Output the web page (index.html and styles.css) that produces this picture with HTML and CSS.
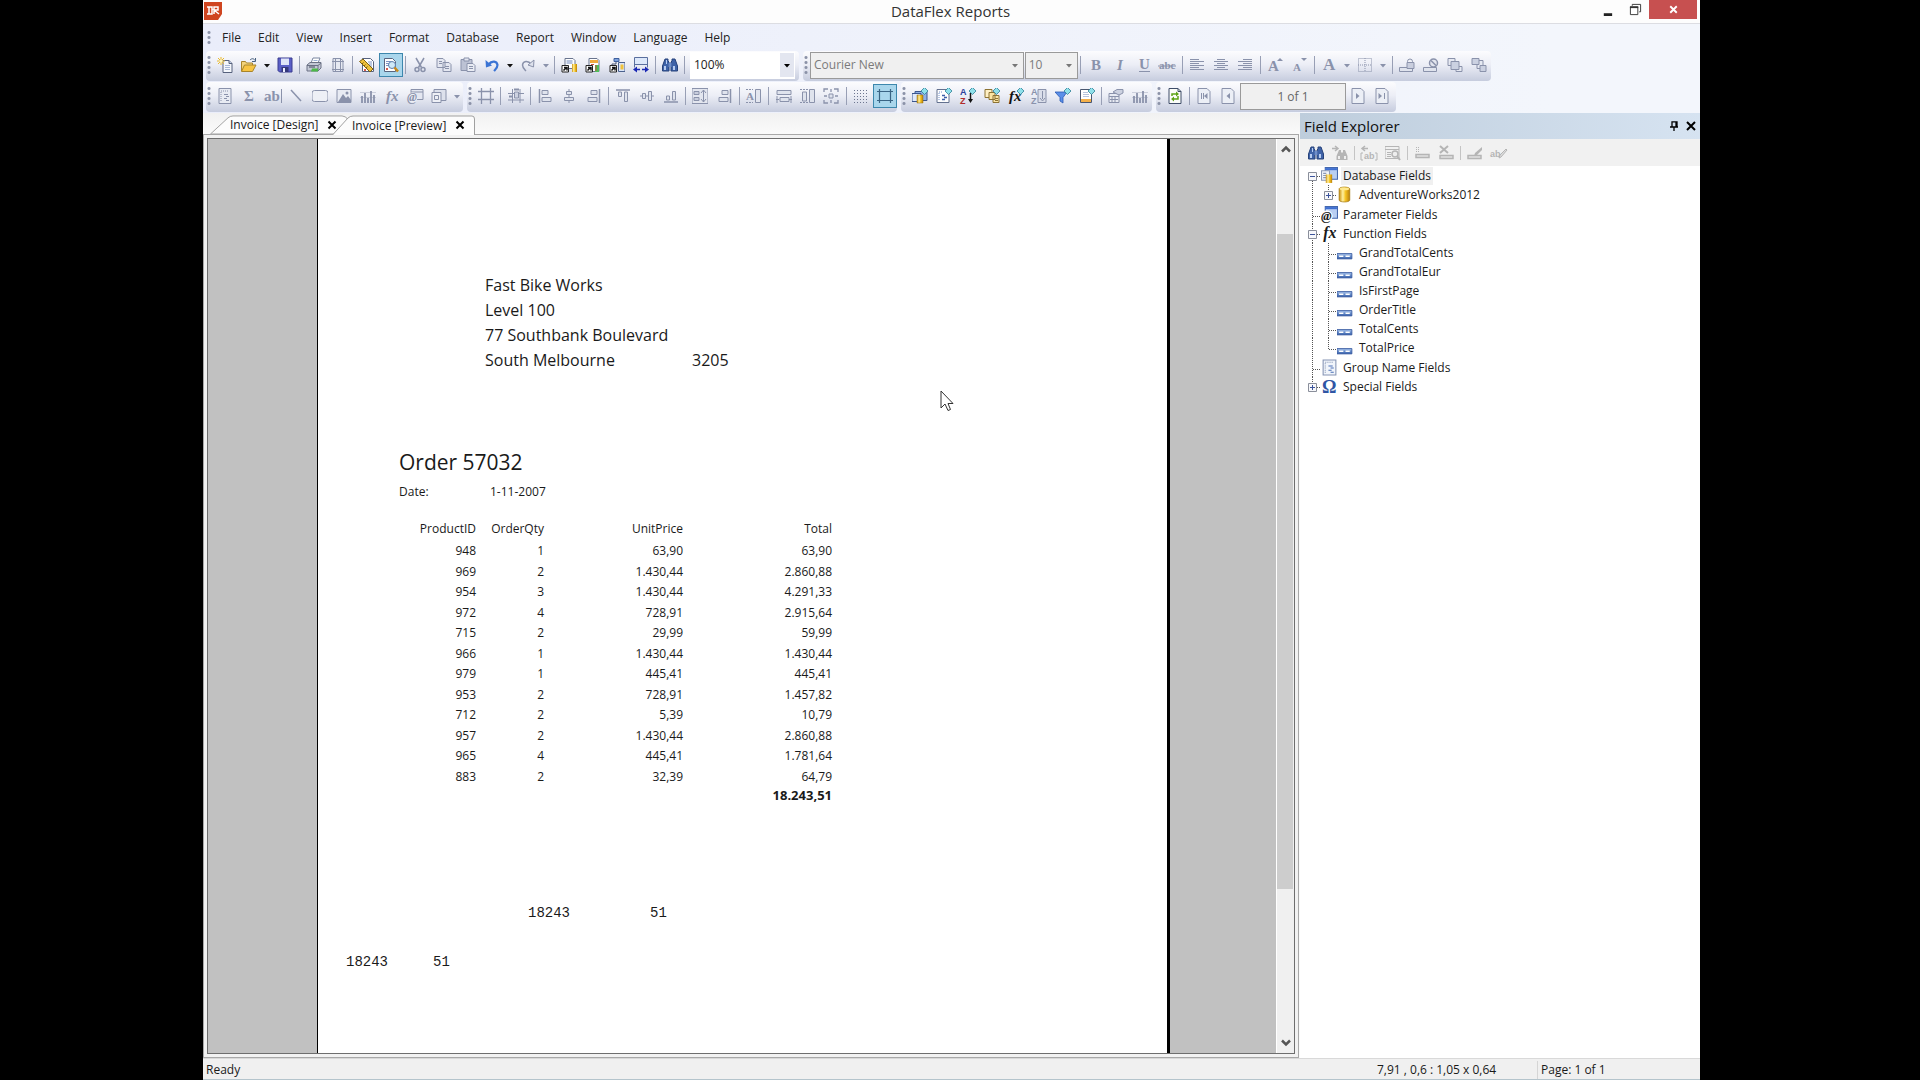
FILE: index.html
```
<!DOCTYPE html>
<html lang="en">
<head>
<meta charset="UTF-8">
<meta name="viewport" content="width=device-width, initial-scale=1.0">
<title>DataFlex Reports</title>
<link rel="stylesheet" href="styles.css">
</head>
<body>

<!-- icon set, all drawn on a 16x16 grid; icons with lettering are inline in their buttons -->
<svg class="sprite" width="0" height="0" aria-hidden="true">
    <defs>
        <linearGradient id="gold" x1="0" x2="1" y1="0" y2="0">
            <stop offset="0" stop-color="#c98f0c"/><stop offset=".35" stop-color="#fff0a0"/><stop offset=".6" stop-color="#f5c324"/><stop offset="1" stop-color="#b9800a"/>
        </linearGradient>
        <linearGradient id="steel" x1="0" x2="0" y1="0" y2="1">
            <stop offset="0" stop-color="#a9c6f0"/><stop offset="1" stop-color="#2f5aa6"/>
        </linearGradient>
    </defs>

    <symbol id="logo" viewBox="0 0 18 18"><path d="M0 0h18v12l-4 6H0z" fill="#cf4520"/><path d="M3 5h5v7H3M5 5v7M10 12V5h4v3h-4l5 4" fill="none" stroke="#fff" stroke-width="1.500"/></symbol>
    <symbol id="caret" viewBox="0 0 8 16"><path d="M1 7h6L4 10.500z" fill="currentColor"/></symbol>

    <symbol id="new" viewBox="0 0 16 16"><path d="M6 3.500h6l3 3v9H6z" fill="#f4f7fc" stroke="#56617c"/><path d="M12 3.500v3h3" fill="#c3d0e8" stroke="#56617c"/><path d="M8 8.500h5M8 10.500h5M8 12.500h5" stroke="#a8b8d6"/><path d="M4 0v8M0 4h8M1 1l6 6M7 1L1 7" stroke="#e9b92c"/><circle cx="4" cy="4" r="1.500" fill="#fff6bd"/></symbol>
    <symbol id="open" viewBox="0 0 16 16"><path d="M.5 14V4.500h4l1 1.500h6v3" fill="#f3d37a" stroke="#a8842b"/><path d="M.5 14.500L3.500 8H15l-3.500 6.500z" fill="#f7c443" stroke="#a8842b"/><path d="M9 3c2-2 4-1.500 5 .5M14.500 1v3.500H11" fill="none" stroke="#47607f"/></symbol>
    <symbol id="save" viewBox="0 0 16 16"><path d="M1 1h14v14H2.500L1 13.500z" fill="#5a5fc6" stroke="#3a3d90"/><path d="M4 1.500h8V8H4z" fill="#dfe4f8"/><path d="M4.500 10h7v5h-7z" fill="#34387a"/><path d="M6 11h2v4H6z" fill="#eef"/></symbol>
    <symbol id="print" viewBox="0 0 16 16"><path d="M5 6L7 1h7l-2 5z" fill="#fff" stroke="#7a86a0"/><path d="M7.500 3.500h4" stroke="#9db2d8"/><path d="M1 8l3-2.500h11V11l-3 3H1z" fill="#c3c8d5" stroke="#6a7184"/><path d="M1 8.500h11V14M12 8.500L15 6" fill="none" stroke="#6a7184"/><path d="M6 11.500h6v3H5z" fill="#4cb848"/><path d="M3 10h6" stroke="#454c5e"/></symbol>
    <symbol id="pagesetup" viewBox="0 0 16 16"><path d="M3 1.500h7l3 2v11H3z" fill="#e6e9f2" stroke="currentColor"/><path d="M5.500 1v14M10.500 1v14M2 4.500h12M2 12.500h12" stroke="currentColor"/></symbol>
    <symbol id="design" viewBox="0 0 16 16"><path d="M3.500 1.500h8l3 3v10h-11z" fill="#fff" stroke="#58637e"/><path d="M9 5h4M10 7h3M11 9h2" stroke="#7d93c2"/><path d="M5 12h2v2H5z" fill="#d65b4e"/><path d="M.5 4.500L4 2l10 10-3 3z" fill="#edc03a" stroke="#7d6114"/><path d="M3 7l1.500-1.500M5 9l1.500-1.500M7 11l1.500-1.500" stroke="#7d6114"/></symbol>
    <symbol id="preview" viewBox="0 0 16 16"><path d="M1.500 1.500h8l3 3v10h-11z" fill="#fff" stroke="#58637e"/><path d="M3 4.500h5M3 6.500h3M3 8.500h3" stroke="#7d93c2"/><path d="M3 11h2v2H3z" fill="#d65b4e"/><circle cx="9" cy="8" r="3.500" fill="#cfeaf8" stroke="#5d7fae"/><path d="M11.500 10.500l3.500 4" stroke="#c8891d" stroke-width="2.500"/></symbol>
    <symbol id="cut" viewBox="0 0 16 16"><path d="M4 1l5.500 9.500M12 1L6.500 10.500" fill="none" stroke="currentColor" stroke-width="1.500"/><circle cx="5" cy="12.500" r="2" fill="none" stroke="currentColor" stroke-width="1.500"/><circle cx="11" cy="12.500" r="2" fill="none" stroke="currentColor" stroke-width="1.500"/></symbol>
    <symbol id="copy" viewBox="0 0 16 16"><path d="M1 1.500h6l2 2v7H1zM7 5.500h6l2 2v7H7z" fill="#e4e7f1" stroke="currentColor"/><path d="M3 4.500h3M3 6.500h3M9 9.500h4M9 11.500h4" stroke="currentColor"/></symbol>
    <symbol id="paste" viewBox="0 0 16 16"><path d="M1 2.500h11v11H1z" fill="#bcc2d4" stroke="currentColor"/><path d="M4 1h5v3H4z" fill="#e4e7f1" stroke="currentColor"/><path d="M7 6.500h6l2 2v6H7z" fill="#e9ecf4" stroke="currentColor"/><path d="M9 9.500h4M9 11.500h4" stroke="currentColor"/></symbol>
    <symbol id="undo" viewBox="0 0 16 16"><path d="M4.500 7.500C8 3 13 4 13.500 8c0 3-2 4.500-3.500 6" fill="none" stroke="#3b74d4" stroke-width="2.200"/><path d="M1.500 3l.5 7.500 6-2z" fill="#3b74d4"/></symbol>
    <symbol id="redo" viewBox="0 0 16 16"><path d="M11.500 7.500C8 3 3 4 2.500 8c0 3 2 4.500 3.500 6" fill="none" stroke="currentColor" stroke-width="1.500"/><path d="M14 3l-.5 7-5.500-2z" fill="#dde1ec" stroke="currentColor"/></symbol>
    <symbol id="dblink" viewBox="0 0 16 16"><path d="M4 1.500h8l2 2v8H4z" fill="#fff" stroke="#69748e"/><path d="M5.500 4h6M5.500 6h6" stroke="#6d87bd"/><path d="M11 7h5v8h-5z" fill="url(#gold)"/><path d="M1 8.500h6.500V15H1z" fill="#fff" stroke="#222"/><path d="M2.500 13.500l3-3M3 10.500h3v3" fill="none" stroke="#111" stroke-width="1.500"/></symbol>
    <symbol id="replink" viewBox="0 0 16 16"><path d="M4 1.500h8l2 2v11H4z" fill="#fff" stroke="#69748e"/><path d="M5 3h8v3H5z" fill="#f0a93c"/><path d="M10 8h4v7h-4z" fill="#4fbf5a"/><path d="M6 7.500h3M11 8v6" stroke="#c8523a"/><path d="M1 8.500h6.500V15H1z" fill="#fff" stroke="#222"/><path d="M2.500 13.500l3-3M3 10.500h3v3" fill="none" stroke="#111" stroke-width="1.500"/></symbol>
    <symbol id="relation" viewBox="0 0 16 16"><path d="M5 1.500h5v3H5z" fill="#7da1dc" stroke="#3e5f9d"/><path d="M7 5v2H3v1M10 6h4" fill="none" stroke="#47536e"/><path d="M9.500 5.500H16v9H9.500z" fill="#dce6f7" stroke="#4b618e"/><path d="M11.500 7.500h3v5h-3z" fill="#f0c23c"/><path d="M1 8.500h6.500V15H1z" fill="#fff" stroke="#222"/><path d="M2.500 13.500l3-3M3 10.500h3v3" fill="none" stroke="#111" stroke-width="1.500"/></symbol>
    <symbol id="fitwidth" viewBox="0 0 16 16"><path d="M1.500.5h13v7h-13z" fill="#dde8fa" stroke="#5a6f9e"/><path d="M1.500 5.500v5M14.500 5.500v5" stroke="#5a6f9e"/><path d="M0 12.500L4 9.500v6zM16 12.500L12 9.500v6z" fill="#1a28b4"/><path d="M4 12.500h3M9 12.500h3" stroke="#1a28b4" stroke-width="1.500"/></symbol>
    <symbol id="find" viewBox="0 0 16 16"><path d="M3 2h3v2l1 1v9H.5V9zM13 2h-3v2L9 5v9h6.500V9z" fill="#3f63a8" stroke="#27427a"/><path d="M6.500 6h3v4h-3z" fill="#6f8fcb"/><path d="M2 9h2v4H2zM11 9h2v4h-2zM4 3h1v4H4z" fill="#b8cdf1"/></symbol>

    <symbol id="textleft" viewBox="0 0 16 16"><path d="M1 2.500h9M1 4.500h14M1 6.500h9M1 8.500h14M1 10.500h9M1 12.500h14" stroke="currentColor"/></symbol>
    <symbol id="textcenter" viewBox="0 0 16 16"><path d="M4 2.500h8M1 4.500h14M4 6.500h8M1 8.500h14M4 10.500h8M1 12.500h14" stroke="currentColor"/></symbol>
    <symbol id="textright" viewBox="0 0 16 16"><path d="M6 2.500h9M1 4.500h14M6 6.500h9M1 8.500h14M6 10.500h9M1 12.500h14" stroke="currentColor"/></symbol>
    <symbol id="border" viewBox="0 0 16 16"><path d="M1.500 1.500h13v13h-13zM8 1v14M1 8h14" fill="none" stroke="currentColor" stroke-dasharray="1 1"/></symbol>
    <symbol id="lock" viewBox="0 0 16 16"><path d="M.5 10.500h13v4H.5z" fill="#dfe3ed" stroke="currentColor"/><circle cx="11" cy="4.500" r="2.500" fill="none" stroke="currentColor"/><path d="M8 5.500h7v6H8z" fill="#c9cede" stroke="currentColor"/></symbol>
    <symbol id="forbid" viewBox="0 0 16 16"><path d="M.5 10.500h13v4H.5z" fill="#dfe3ed" stroke="currentColor"/><circle cx="10.500" cy="6" r="4" fill="#e3e6ef" stroke="currentColor" stroke-width="1.500"/><path d="M8 3.500l5 5" stroke="currentColor" stroke-width="1.500"/></symbol>
    <symbol id="front" viewBox="0 0 16 16"><path d="M1 1.500h7v7H1zM9 9.500h6v5H9z" fill="#e6e9f2" stroke="currentColor"/><path d="M4 4.500h8v8H4z" fill="#cbd1e1" stroke="currentColor"/></symbol>
    <symbol id="back" viewBox="0 0 16 16"><path d="M6 3.500h6v8H6z" fill="#e6e9f2" stroke="currentColor"/><path d="M1 1.500h7v6H1zM9 8.500h6v6H9z" fill="#cbd1e1" stroke="currentColor"/></symbol>

    <symbol id="group" viewBox="0 0 16 16"><path d="M2 .5h12v15H2z" fill="#e8ebf3" stroke="currentColor"/><path d="M4 4v9M4 3h8" stroke="currentColor" stroke-dasharray="1 1"/><path d="M7 6.500h4M9 8.500h3M7 10.500h3M9 12.500h3" stroke="currentColor"/></symbol>
    <symbol id="line" viewBox="0 0 16 16"><path d="M3 2l10 11" stroke="currentColor" stroke-width="1.500"/></symbol>
    <symbol id="roundrect" viewBox="0 0 16 16"><rect x="0" y="2.500" width="16" height="11" rx="2.500" fill="#eef0f6" stroke="currentColor"/></symbol>
    <symbol id="picture" viewBox="0 0 16 16"><path d="M1 1.500h14v13H1z" fill="#e8ebf3" stroke="currentColor"/><path d="M2 14l5-8 3 4 2-2 3 4v2z" fill="currentColor"/><circle cx="11" cy="5" r="1.500" fill="currentColor"/></symbol>
    <symbol id="chart" viewBox="0 0 16 16"><path d="M2 8v7M5 5v10M8 10v5M11 3v12M14 7v8" stroke="currentColor" stroke-width="1.800"/><path d="M0 4.500h16M0 9.500h16" stroke="currentColor" opacity=".35"/></symbol>
    <symbol id="subreport" viewBox="0 0 16 16"><path d="M3 1.500h12v11H3z" fill="#dde1ec" stroke="currentColor"/><path d="M1 4.500h9v10H1z" fill="#eef0f6" stroke="currentColor"/><path d="M3.500 7.500h4v4h-4z" fill="none" stroke="currentColor"/></symbol>

    <symbol id="grid" viewBox="0 0 16 16"><path d="M3.500 0v16M12.500 0v16M0 3.500h16M0 11.500h16" stroke="currentColor" stroke-width="1.300"/></symbol>
    <symbol id="snap" viewBox="0 0 16 16"><path d="M4.500 1v14M12 1v14M0 5.500h16M0 12h16" stroke="currentColor"/><path d="M6.500 4h4v6h-4z" fill="#cdd2e1" stroke="currentColor"/><path d="M6 1.500h5M1 8.500h3" stroke="currentColor" stroke-width="2"/></symbol>
    <symbol id="objleft" viewBox="0 0 16 16"><path d="M1.500 1v14" stroke="currentColor" stroke-width="1.500"/><path d="M4 2.500h6v4H4zM4 9.500h9v4H4z" fill="#dfe3ed" stroke="currentColor"/></symbol>
    <symbol id="objcenter" viewBox="0 0 16 16"><path d="M8 1v14" stroke="currentColor"/><path d="M5.500 3.500h5v3h-5zM3.500 9.500h9v3h-9z" fill="#dfe3ed" stroke="currentColor"/></symbol>
    <symbol id="objright" viewBox="0 0 16 16"><path d="M14.500 1v14" stroke="currentColor" stroke-width="1.500"/><path d="M6 2.500h6v4H6zM3 9.500h9v4H3z" fill="#dfe3ed" stroke="currentColor"/></symbol>
    <symbol id="objtop" viewBox="0 0 16 16"><path d="M1 2h14" stroke="currentColor" stroke-width="1.500"/><path d="M3.500 4v4.500h3V4zM9.500 4v9.500h3V4z" fill="#dfe3ed" stroke="currentColor"/></symbol>
    <symbol id="objmiddle" viewBox="0 0 16 16"><path d="M1 8h14" stroke="currentColor"/><path d="M3.500 5.500h3v5h-3zM9.500 3.500h3v9h-3z" fill="#dfe3ed" stroke="currentColor"/></symbol>
    <symbol id="objbottom" viewBox="0 0 16 16"><path d="M1 14h14" stroke="currentColor" stroke-width="1.500"/><path d="M3.500 8v4h3V8zM9.500 3.500V12h3V3.500z" fill="#dfe3ed" stroke="currentColor"/></symbol>
    <symbol id="sameheight" viewBox="0 0 16 16"><path d="M0 .5h16v15H0z" fill="#e3e6ef" stroke="currentColor"/><path d="M2 3.500h5v3H2zM2 9.500h5v3H2z" fill="#c9cedd" stroke="currentColor"/><path d="M11.500 2v12M9 5l2.500-3L14 5M9 11l2.500 3 2.500-3" fill="none" stroke="currentColor"/></symbol>
    <symbol id="equalwidth" viewBox="0 0 16 16"><path d="M1 2.500h14v4H1zM4 9.500h9v4H4z" fill="#dfe3ed" stroke="currentColor"/><path d="M1 8v7M15 8v7M0 11.500h3M13 11.500h3" stroke="currentColor"/></symbol>
    <symbol id="equalheight" viewBox="0 0 16 16"><path d="M2.500 4h4v9h-4zM9.500 1.500h5v13h-5z" fill="#dfe3ed" stroke="currentColor"/><path d="M0 1.500h8M0 14.500h8" stroke="currentColor" stroke-dasharray="2 1"/></symbol>
    <symbol id="equalboth" viewBox="0 0 16 16"><path d="M1 4V1h4M11 1h4v3M15 12v3h-4M5 15H1v-3M8 1v3M8 12v3M1 8h3M12 8h3" fill="none" stroke="currentColor" stroke-width="1.300"/><path d="M6 6h4v4H6z" fill="#dfe3ed" stroke="currentColor"/></symbol>
    <symbol id="dots" viewBox="0 0 16 16"><path d="M1 2.500h15M1 5.500h15M1 8.500h15M1 11.500h15M1 14.500h15" stroke="#6d7690" stroke-dasharray="1 2"/></symbol>
    <symbol id="rulers" viewBox="0 0 16 16"><path d="M2.500 1v14M13.500 1v14M0 3.500h16M0 12.500h16" stroke="#3a6484" stroke-width="1.200"/></symbol>

    <symbol id="gem" viewBox="0 0 16 16"><path d="M12.500-.5L16 3l-3.500 3.500L9 3z" fill="#8fe0ea" stroke="#2f7f96" stroke-width=".8"/></symbol>
    <symbol id="dbtool" viewBox="0 0 16 16"><path d="M3 3.500h12v9H3z" fill="#8fb0e8" stroke="#3b568f"/><path d="M0 5.500h9v8H0z" fill="#dfe9fb" stroke="#3b568f"/><path d="M5 7h6v8H5z" fill="url(#gold)" stroke="#95700e" stroke-width=".5"/><use href="#gem"/></symbol>
    <symbol id="grouptool" viewBox="0 0 16 16"><path d="M1 1.500h12v13H1z" fill="#fff" stroke="#63718f"/><path d="M3 4h4M3 5v8" stroke="#7290cc" stroke-dasharray="1 1"/><path d="M6 7.500h3M8 9.500h3M6 11.500h3" stroke="#3e5fa8" stroke-width="1.500"/><use href="#gem"/></symbol>
    <symbol id="copytool" viewBox="0 0 16 16"><path d="M1 1.500h7v8H1z" fill="#fff0c4" stroke="#8c7334"/><path d="M5 4.500h6v7H5zM9 7.500h6v7H9z" fill="#fbe5a3" stroke="#8c7334"/><path d="M11 10.500h3M11 12.500h3" stroke="#8c7334"/><use href="#gem"/></symbol>
    <symbol id="filtertool" viewBox="0 0 16 16"><path d="M0 4h12L8 9.500V15l-3-2V9.500z" fill="#5b8fe8" stroke="#2a58b4" stroke-width=".8"/><use href="#gem"/></symbol>
    <symbol id="sheettool" viewBox="0 0 16 16"><path d="M1.500 1.500h11v13h-11z" fill="#fff" stroke="#4a566f"/><path d="M2 11h10v3H2z" fill="#f4b04a"/><path d="M4 4.500h5M4 6.500h6M4 8.500h6" stroke="#b7c4de"/><use href="#gem"/></symbol>
    <symbol id="props" viewBox="0 0 16 16"><path d="M1 5.500h10v9H1z" fill="#e8ebf3" stroke="currentColor"/><path d="M1 8.500h10M4 9v5M7 9v5M2 11.500h8" stroke="currentColor"/><path d="M5 4l4-2.500h6V5l-4 2z" fill="#ccd1e0" stroke="currentColor"/></symbol>

    <symbol id="refresh" viewBox="0 0 16 16"><path d="M2 .5h9l3 3v12H2z" fill="#fbfdf8" stroke="#3f4d68"/><path d="M11 .5v3h3" fill="none" stroke="#3f4d68"/><path d="M5 8V6h5M11 8v3H6" fill="none" stroke="#5da313" stroke-width="1.500"/><path d="M9 3.500L12 6 9 8.500zM7 8.500L4 11l3 2.500z" fill="#5da313"/></symbol>
    <symbol id="first" viewBox="0 0 16 16"><path d="M2 .5h9l3 3v12H2z" fill="#eceff6" stroke="currentColor"/><path d="M5.500 5v6M7.500 5v6" stroke="currentColor"/><path d="M11.500 5v6L8 8z" fill="currentColor"/></symbol>
    <symbol id="prev" viewBox="0 0 16 16"><path d="M2 .5h9l3 3v12H2z" fill="#eceff6" stroke="currentColor"/><path d="M10 5v6L6.500 8z" fill="currentColor"/></symbol>
    <symbol id="next" viewBox="0 0 16 16"><path d="M2 .5h9l3 3v12H2z" fill="#eceff6" stroke="currentColor"/><path d="M6 5v6L9.500 8z" fill="currentColor"/></symbol>
    <symbol id="last" viewBox="0 0 16 16"><path d="M2 .5h9l3 3v12H2z" fill="#eceff6" stroke="currentColor"/><path d="M4.500 5v6L8 8z" fill="currentColor"/><path d="M10.500 5v6" stroke="currentColor"/></symbol>

    <symbol id="findnext" viewBox="0 0 16 16"><path d="M0 3.500h5M3 1l3 2.500L3 6" fill="none" stroke="currentColor" stroke-width="1.500"/><path d="M7 5h2v2l1 1v7H4.500v-4zM13 5h-2v2l-1 1v7h5.500v-4z" fill="currentColor"/><path d="M6 11h2v3H6zM12 11h2v3h-2z" fill="#eee"/></symbol>
    <symbol id="browse" viewBox="0 0 16 16"><path d="M0 1.500h14v12H0zM0 4.500h14M2 7.500h4M2 9.500h4M2 11.500h4" fill="none" stroke="currentColor"/><circle cx="10" cy="9" r="3" fill="#eee" stroke="currentColor" stroke-width="1.500"/><path d="M12 11l3 4" stroke="currentColor" stroke-width="2"/></symbol>
    <symbol id="addfield" viewBox="0 0 16 16"><path d="M2 2.500h4M2 4.500h4M2 6.500h4" stroke="currentColor" stroke-dasharray="1 1"/><path d="M2 9.500h13v3H2z" fill="#e2e2e2" stroke="currentColor" stroke-width="1.500"/></symbol>
    <symbol id="delfield" viewBox="0 0 16 16"><path d="M2 1l8 7M10 1L2 8" stroke="currentColor" stroke-width="2"/><path d="M2 10.500h13v3H2z" fill="#e2e2e2" stroke="currentColor" stroke-width="1.500"/></symbol>
    <symbol id="editfield" viewBox="0 0 16 16"><path d="M1 10.500h13v3H1z" fill="#e2e2e2" stroke="currentColor" stroke-width="1.500"/><path d="M7 11l1-3 7-6v3l-6 6z" fill="currentColor"/></symbol>

    <symbol id="t-db" viewBox="0 0 16 16"><path d="M4 .5h11.500v11H4z" fill="#b9cff3" stroke="#4468ad"/><path d="M4 1h11v2H4z" fill="#3f6fd0"/><path d="M.5 3.500H8v9H.5z" fill="#f2f5fb" stroke="#8b98b5"/><path d="M2 6h3M2 8h3M2 10h3" stroke="#8b98b5"/><path d="M4.500 7h6v8h-6z" fill="url(#gold)"/></symbol>
    <symbol id="t-cyl" viewBox="0 0 16 16"><path d="M2 2.500C3 .5 11 .5 12 2.500v11c-1 2-9 2-10 0z" fill="url(#gold)" stroke="#a5780c" stroke-width=".7"/><ellipse cx="7" cy="2.800" rx="4.500" ry="1.300" fill="#ffe98e"/></symbol>
    <symbol id="t-field" viewBox="0 0 16 16"><path d="M0 9h14v5H0z" fill="url(#steel)" stroke="#36599f" stroke-width=".8"/><path d="M2 11.500h4M8 11.500h4" stroke="#fff" stroke-width="1.300"/></symbol>
    <symbol id="t-group" viewBox="0 0 16 16"><path d="M2 1h12v14H2z" fill="#f1f5fb" stroke="#8594b3"/><path d="M4 4v9M4 3h8" stroke="#8594b3" stroke-dasharray="1 1"/><path d="M7 6.500h4M9 8.500h3M7 10.500h3M9 12.500h3" stroke="#4a6fb5"/></symbol>

    <!-- tree guides -->
    <symbol id="g-line" viewBox="0 0 16 20"><path d="M7.500 0v20" stroke="#555" stroke-dasharray="1 1"/></symbol>
    <symbol id="g-tee" viewBox="0 0 16 20"><path d="M7.500 0v20M8 11.500h8" stroke="#555" stroke-dasharray="1 1"/></symbol>
    <symbol id="g-end" viewBox="0 0 16 20"><path d="M7.500 0v11.500H16" fill="none" stroke="#555" stroke-dasharray="1 1"/></symbol>
    <symbol id="g-minus-first" viewBox="0 0 16 20"><path d="M7.500 15v5M12 10.500h4" stroke="#555" stroke-dasharray="1 1"/><path d="M3.500 6.500h8v8h-8z" fill="#f7f8fb" stroke="#8a8f9b"/><path d="M5 10.500h5" stroke="#3c549c"/></symbol>
    <symbol id="g-minus" viewBox="0 0 16 20"><path d="M7.500 0v20M12 10.500h4" stroke="#555" stroke-dasharray="1 1"/><path d="M3.500 6.500h8v8h-8z" fill="#f7f8fb" stroke="#8a8f9b"/><path d="M5 10.500h5" stroke="#3c549c"/></symbol>
    <symbol id="g-plus" viewBox="0 0 16 20"><path d="M7.500 0v6M12 10.500h4" stroke="#555" stroke-dasharray="1 1"/><path d="M3.500 6.500h8v8h-8z" fill="#f7f8fb" stroke="#8a8f9b"/><path d="M5 10.500h5M7.500 8v5" stroke="#3c549c"/></symbol>
</svg>

<div class="app">
    <header class="titlebar">
        <svg class="logo"><use href="#logo"/></svg>
        <h1>DataFlex Reports</h1>
        <div class="winbuttons">
            <button class="winbtn" aria-label="Minimize"><svg viewBox="0 0 14 14"><path d="M3 11h9v3H3z" fill="#222"/></svg></button>
            <button class="winbtn" aria-label="Restore"><svg viewBox="0 0 14 14"><path d="M3.500 3V1.500h9v8H11" fill="none" stroke="#333"/><path d="M1.500 4.500h8v8h-8z" fill="#fff" stroke="#333"/><path d="M1 4.500h9" stroke="#333" stroke-width="2"/></svg></button>
            <button class="winbtn close" aria-label="Close"><svg viewBox="0 0 14 14"><path d="M3.500 3.500l7 7M10.500 3.500l-7 7" stroke="#fff" stroke-width="2"/></svg></button>
        </div>
    </header>

    <div class="dock">
        <nav class="menubar">
            <span class="grip"></span>
            <a href="#">File</a>
            <a href="#">Edit</a>
            <a href="#">View</a>
            <a href="#">Insert</a>
            <a href="#">Format</a>
            <a href="#">Database</a>
            <a href="#">Report</a>
            <a href="#">Window</a>
            <a href="#">Language</a>
            <a href="#">Help</a>
        </nav>

        <div class="toolrow">
            <div class="toolbar standard">
                <span class="grip"></span>
                <button aria-label="New"><svg><use href="#new"/></svg></button>
                <button aria-label="Open"><svg><use href="#open"/></svg></button>
                <button class="drop" aria-label="Recent files"><svg><use href="#caret"/></svg></button>
                <button aria-label="Save"><svg><use href="#save"/></svg></button>
                <span class="sep"></span>
                <button aria-label="Print"><svg><use href="#print"/></svg></button>
                <button disabled aria-label="Page setup"><svg><use href="#pagesetup"/></svg></button>
                <span class="sep"></span>
                <button aria-label="Design"><svg><use href="#design"/></svg></button>
                <button class="on" aria-label="Preview"><svg><use href="#preview"/></svg></button>
                <span class="sep"></span>
                <button disabled aria-label="Cut"><svg><use href="#cut"/></svg></button>
                <button disabled aria-label="Copy"><svg><use href="#copy"/></svg></button>
                <button disabled aria-label="Paste"><svg><use href="#paste"/></svg></button>
                <button aria-label="Undo"><svg><use href="#undo"/></svg></button>
                <button class="drop" aria-label="Undo list"><svg><use href="#caret"/></svg></button>
                <button disabled aria-label="Redo"><svg><use href="#redo"/></svg></button>
                <button class="drop" disabled aria-label="Redo list"><svg><use href="#caret"/></svg></button>
                <span class="sep"></span>
                <button aria-label="Database link"><svg><use href="#dblink"/></svg></button>
                <button aria-label="Report link"><svg><use href="#replink"/></svg></button>
                <button aria-label="Relations"><svg><use href="#relation"/></svg></button>
                <button aria-label="Fit width"><svg><use href="#fitwidth"/></svg></button>
                <span class="sep"></span>
                <button aria-label="Find"><svg><use href="#find"/></svg></button>
                <span class="sep"></span>
                <span class="combo zoom">
                    <select aria-label="Zoom"><option>100%</option></select>
                    <svg><use href="#caret"/></svg>
                </span>
            </div>
            <div class="toolbar format">
                <span class="grip"></span>
                <span class="combo font">
                    <select aria-label="Font" disabled><option>Courier New</option></select>
                    <svg><use href="#caret"/></svg>
                </span>
                <span class="combo size">
                    <select aria-label="Font size" disabled><option>10</option></select>
                    <svg><use href="#caret"/></svg>
                </span>
                <span class="sep"></span>
                <button disabled aria-label="Bold"><svg viewBox="0 0 16 16"><text x="3" y="13" class="glyph">B</text></svg></button>
                <button disabled aria-label="Italic"><svg viewBox="0 0 16 16"><text x="5" y="13" class="glyph slanted">I</text></svg></button>
                <button disabled aria-label="Underline"><svg viewBox="0 0 16 16"><text x="3" y="12" class="glyph">U</text><path d="M3 14.500h11" stroke="currentColor"/></svg></button>
                <button disabled aria-label="Strikethrough"><svg viewBox="0 0 16 16"><text x="0" y="12" class="glyph small">abc</text><path d="M-1 9h18" stroke="currentColor"/></svg></button>
                <span class="sep"></span>
                <button disabled aria-label="Align left"><svg><use href="#textleft"/></svg></button>
                <button disabled aria-label="Align center"><svg><use href="#textcenter"/></svg></button>
                <button disabled aria-label="Align right"><svg><use href="#textright"/></svg></button>
                <span class="sep"></span>
                <button disabled aria-label="Grow font"><svg viewBox="0 0 16 16"><text x="1" y="14" class="glyph">A</text><path d="M10 4h6l-3-3z" fill="currentColor"/></svg></button>
                <button disabled aria-label="Shrink font"><svg viewBox="0 0 16 16"><text x="2" y="14" class="glyph small">A</text><path d="M10 1h6l-3 3z" fill="currentColor"/></svg></button>
                <span class="sep"></span>
                <button disabled aria-label="Font color"><svg viewBox="0 0 16 16"><text x="2" y="13" class="glyph large">A</text></svg></button>
                <button class="drop" disabled aria-label="Pick font color"><svg><use href="#caret"/></svg></button>
                <button disabled aria-label="Borders"><svg><use href="#border"/></svg></button>
                <button class="drop" disabled aria-label="Pick borders"><svg><use href="#caret"/></svg></button>
                <span class="sep"></span>
                <button disabled aria-label="Lock"><svg><use href="#lock"/></svg></button>
                <button disabled aria-label="Suppress"><svg><use href="#forbid"/></svg></button>
                <button disabled aria-label="Bring to front"><svg><use href="#front"/></svg></button>
                <button disabled aria-label="Send to back"><svg><use href="#back"/></svg></button>
            </div>
        </div>

        <div class="toolrow">
            <div class="toolbar insert">
                <span class="grip"></span>
                <button disabled aria-label="Group"><svg><use href="#group"/></svg></button>
                <button disabled aria-label="Summary"><svg viewBox="0 0 16 16"><text x="3" y="13" class="glyph">Σ</text></svg></button>
                <button disabled aria-label="Text"><svg viewBox="0 0 16 16"><text x="-1" y="13" class="glyph">ab</text><path d="M16.500 1v14" stroke="currentColor"/></svg></button>
                <button disabled aria-label="Line"><svg><use href="#line"/></svg></button>
                <button disabled aria-label="Rectangle"><svg><use href="#roundrect"/></svg></button>
                <button disabled aria-label="Picture"><svg><use href="#picture"/></svg></button>
                <button disabled aria-label="Chart"><svg><use href="#chart"/></svg></button>
                <button disabled aria-label="Function"><svg viewBox="0 0 16 16"><text x="2" y="13" class="glyph slanted">fx</text></svg></button>
                <button disabled aria-label="Parameter"><svg viewBox="0 0 16 16"><path d="M4 1.500h12v10H4zM4 4h12" fill="#e4e7f1" stroke="currentColor"/><circle cx="5.500" cy="9.500" r="5" fill="#eef0f6"/><text x="0" y="13" class="glyph at">@</text></svg></button>
                <button disabled aria-label="Subreport"><svg><use href="#subreport"/></svg></button>
                <button class="drop" disabled aria-label="Subreport list"><svg><use href="#caret"/></svg></button>
            </div>
            <div class="toolbar arrange">
                <span class="grip"></span>
                <button disabled aria-label="Snap to grid"><svg><use href="#grid"/></svg></button>
                <span class="sep"></span>
                <button disabled aria-label="Snap to guides"><svg><use href="#snap"/></svg></button>
                <span class="sep"></span>
                <button disabled aria-label="Lefts"><svg><use href="#objleft"/></svg></button>
                <button disabled aria-label="Centers"><svg><use href="#objcenter"/></svg></button>
                <button disabled aria-label="Rights"><svg><use href="#objright"/></svg></button>
                <span class="sep"></span>
                <button disabled aria-label="Tops"><svg><use href="#objtop"/></svg></button>
                <button disabled aria-label="Middles"><svg><use href="#objmiddle"/></svg></button>
                <button disabled aria-label="Bottoms"><svg><use href="#objbottom"/></svg></button>
                <span class="sep"></span>
                <button disabled aria-label="Section height"><svg><use href="#sameheight"/></svg></button>
                <button disabled aria-label="Section right"><svg><use href="#objright"/></svg></button>
                <span class="sep"></span>
                <button disabled aria-label="Size to text"><svg viewBox="0 0 16 16"><path d="M0 1.500h7M0 14.500h7" stroke="currentColor" stroke-dasharray="2 1"/><text x="0" y="12" class="glyph small">A</text><path d="M9.500 1.500h5v13h-5z" fill="#e3e6ef" stroke="currentColor"/></svg></button>
                <span class="sep"></span>
                <button disabled aria-label="Same width"><svg><use href="#equalwidth"/></svg></button>
                <button disabled aria-label="Same height"><svg><use href="#equalheight"/></svg></button>
                <button disabled aria-label="Same size"><svg><use href="#equalboth"/></svg></button>
                <span class="sep"></span>
                <button disabled aria-label="Show grid"><svg><use href="#dots"/></svg></button>
                <button class="on" aria-label="Show guides"><svg><use href="#rulers"/></svg></button>
            </div>
            <div class="toolbar report">
                <span class="grip"></span>
                <button aria-label="Tables"><svg><use href="#dbtool"/></svg></button>
                <button aria-label="Groups"><svg><use href="#grouptool"/></svg></button>
                <button aria-label="Sort"><svg viewBox="0 0 16 16"><text x="0" y="7" class="letter sort-a">A</text><text x="0" y="16" class="letter sort-z">Z</text><path d="M10.500 5v7" stroke="#111" stroke-width="1.500"/><path d="M8 11h5l-2.500 4z" fill="#111"/><use href="#gem"/></svg></button>
                <button aria-label="Copies"><svg><use href="#copytool"/></svg></button>
                <button aria-label="Functions"><svg viewBox="0 0 16 16"><text x="1" y="13" class="glyph slanted">fx</text><use href="#gem"/></svg></button>
                <button disabled aria-label="Group sort"><svg viewBox="0 0 16 16"><path d="M7 1.500h8v13H7z" fill="#dadeea" stroke="currentColor"/><text x="0" y="7" class="letter">A</text><text x="0" y="16" class="letter">Z</text><path d="M11.500 3v8M9 10l2.500 3 2.500-3" fill="none" stroke="currentColor"/></svg></button>
                <button aria-label="Filter"><svg><use href="#filtertool"/></svg></button>
                <button aria-label="Sections"><svg><use href="#sheettool"/></svg></button>
                <span class="sep"></span>
                <button disabled aria-label="Properties"><svg><use href="#props"/></svg></button>
                <button disabled aria-label="Chart settings"><svg><use href="#chart"/></svg></button>
            </div>
            <div class="toolbar pager">
                <span class="grip"></span>
                <button aria-label="Refresh"><svg><use href="#refresh"/></svg></button>
                <span class="sep"></span>
                <button disabled aria-label="First page"><svg><use href="#first"/></svg></button>
                <button disabled aria-label="Previous page"><svg><use href="#prev"/></svg></button>
                <input type="text" value="1 of 1" aria-label="Page" disabled>
                <button disabled aria-label="Next page"><svg><use href="#next"/></svg></button>
                <button disabled aria-label="Last page"><svg><use href="#last"/></svg></button>
            </div>
        </div>
    </div>

    <div class="workspace">
        <main class="documents">
            <div class="tabs">
                <div class="tab">
                    <svg class="tabshape" viewBox="0 0 143 20" preserveAspectRatio="none"><path d="M.5 20L18 3q2-2 5-2h109q4 0 6 4l4 15z"/></svg>
                    <a href="#">Invoice [Design]</a>
                    <button aria-label="Close Invoice [Design]"><svg viewBox="0 0 10 10"><path d="M1.500 1.500l7 7M8.500 1.500l-7 7" stroke="#000" stroke-width="2"/></svg></button>
                </div>
                <div class="tab active">
                    <svg class="tabshape" viewBox="0 0 143 20" preserveAspectRatio="none"><path d="M.5 20L16 3q2-2 5-2h119q2.500 0 2.500 3v16"/></svg>
                    <a href="#">Invoice [Preview]</a>
                    <button aria-label="Close Invoice [Preview]"><svg viewBox="0 0 10 10"><path d="M1.500 1.500l7 7M8.500 1.500l-7 7" stroke="#000" stroke-width="2"/></svg></button>
                </div>
            </div>

            <div class="frame">
                <div class="viewer">
                    <div class="canvas">
                        <article class="paper">
                            <address class="address">
                                <span>Fast Bike Works</span>
                                <span>Level 100</span>
                                <span>77 Southbank Boulevard</span>
                                <span class="city"><span>South Melbourne</span><span>3205</span></span>
                            </address>
                            <h2>Order 57032</h2>
                            <p class="date"><span>Date:</span><span>1-11-2007</span></p>
                            <table class="orders">
                                <thead>
                                    <tr><th>ProductID</th><th>OrderQty</th><th>UnitPrice</th><th>Total</th></tr>
                                </thead>
                                <tbody>
                                    <tr><td>948</td><td>1</td><td>63,90</td><td>63,90</td></tr>
                                    <tr><td>969</td><td>2</td><td>1.430,44</td><td>2.860,88</td></tr>
                                    <tr><td>954</td><td>3</td><td>1.430,44</td><td>4.291,33</td></tr>
                                    <tr><td>972</td><td>4</td><td>728,91</td><td>2.915,64</td></tr>
                                    <tr><td>715</td><td>2</td><td>29,99</td><td>59,99</td></tr>
                                    <tr><td>966</td><td>1</td><td>1.430,44</td><td>1.430,44</td></tr>
                                    <tr><td>979</td><td>1</td><td>445,41</td><td>445,41</td></tr>
                                    <tr><td>953</td><td>2</td><td>728,91</td><td>1.457,82</td></tr>
                                    <tr><td>712</td><td>2</td><td>5,39</td><td>10,79</td></tr>
                                    <tr><td>957</td><td>2</td><td>1.430,44</td><td>2.860,88</td></tr>
                                    <tr><td>965</td><td>4</td><td>445,41</td><td>1.781,64</td></tr>
                                    <tr><td>883</td><td>2</td><td>32,39</td><td>64,79</td></tr>
                                </tbody>
                                <tfoot>
                                    <tr><td colspan="4">18.243,51</td></tr>
                                </tfoot>
                            </table>
                            <p class="slip inner"><span>18243</span><span>51</span></p>
                            <p class="slip outer"><span>18243</span><span>51</span></p>
                        </article>
                    </div>
                    <div class="scrollbar">
                        <button aria-label="Scroll up"><svg viewBox="0 0 10 10"><path d="M1 7.500l4-4 4 4" fill="none" stroke="#555" stroke-width="2.500"/></svg></button>
                        <div class="track"><div class="thumb"></div></div>
                        <button aria-label="Scroll down"><svg viewBox="0 0 10 10"><path d="M1 2.500l4 4 4-4" fill="none" stroke="#555" stroke-width="2.500"/></svg></button>
                    </div>
                </div>
            </div>
        </main>

        <aside class="explorer">
            <div class="panelhead">
                <h2>Field Explorer</h2>
                <button aria-label="Pin"><svg viewBox="0 0 10 10"><path d="M3 .8h5v5H3zM1 6h8M5 6v4M7 1v5" fill="none" stroke="#000" stroke-width="1.300"/></svg></button>
                <button aria-label="Close"><svg viewBox="0 0 10 10"><path d="M1 1l8 8M9 1L1 9" stroke="#000" stroke-width="2"/></svg></button>
            </div>
            <div class="paneltools">
                <button aria-label="Find"><svg><use href="#find"/></svg></button>
                <button disabled aria-label="Find next"><svg><use href="#findnext"/></svg></button>
                <span class="sep"></span>
                <button disabled aria-label="Insert field"><svg viewBox="0 0 16 16"><path d="M1 3.500h6M4 1L1 3.500 4 6" fill="none" stroke="currentColor" stroke-width="1.500"/><path d="M2 8H0v7h2M14 8h2v7h-2" fill="none" stroke="currentColor"/><text x="3" y="14" class="letter">ab</text></svg></button>
                <button disabled aria-label="Browse data"><svg><use href="#browse"/></svg></button>
                <span class="sep"></span>
                <button disabled aria-label="New field"><svg><use href="#addfield"/></svg></button>
                <button disabled aria-label="Delete field"><svg><use href="#delfield"/></svg></button>
                <span class="sep"></span>
                <button disabled aria-label="Edit field"><svg><use href="#editfield"/></svg></button>
                <button disabled aria-label="Rename field"><svg viewBox="0 0 16 16"><text x="-1" y="12" class="letter">ab</text><path d="M8 13l1-3 6-6 1 1-6 7z" fill="#ddd" stroke="currentColor"/></svg></button>
            </div>
            <ul class="tree">
                <li>
                    <div class="node selected"><svg class="guide"><use href="#g-minus-first"/></svg><svg class="icon"><use href="#t-db"/></svg><span>Database Fields</span></div>
                    <ul>
                        <li><div class="node"><svg class="guide"><use href="#g-line"/></svg><svg class="guide"><use href="#g-plus"/></svg><svg class="icon"><use href="#t-cyl"/></svg><span>AdventureWorks2012</span></div></li>
                    </ul>
                </li>
                <li>
                    <div class="node"><svg class="guide"><use href="#g-tee"/></svg><svg class="icon" viewBox="0 0 16 16"><path d="M4 .5h11.500v11H4z" fill="#b9cff3" stroke="#4468ad"/><path d="M4 1h11v2H4z" fill="#3f6fd0"/><circle cx="5.500" cy="9.500" r="5.500" fill="#fff"/><text x="0" y="13" class="glyph at">@</text></svg><span>Parameter Fields</span></div>
                </li>
                <li>
                    <div class="node"><svg class="guide"><use href="#g-minus"/></svg><svg class="icon" viewBox="0 0 16 16"><text x="2" y="12" class="glyph slanted">fx</text></svg><span>Function Fields</span></div>
                    <ul>
                        <li><div class="node"><svg class="guide"><use href="#g-line"/></svg><svg class="guide"><use href="#g-tee"/></svg><svg class="icon"><use href="#t-field"/></svg><span>GrandTotalCents</span></div></li>
                        <li><div class="node"><svg class="guide"><use href="#g-line"/></svg><svg class="guide"><use href="#g-tee"/></svg><svg class="icon"><use href="#t-field"/></svg><span>GrandTotalEur</span></div></li>
                        <li><div class="node"><svg class="guide"><use href="#g-line"/></svg><svg class="guide"><use href="#g-tee"/></svg><svg class="icon"><use href="#t-field"/></svg><span>IsFirstPage</span></div></li>
                        <li><div class="node"><svg class="guide"><use href="#g-line"/></svg><svg class="guide"><use href="#g-tee"/></svg><svg class="icon"><use href="#t-field"/></svg><span>OrderTitle</span></div></li>
                        <li><div class="node"><svg class="guide"><use href="#g-line"/></svg><svg class="guide"><use href="#g-tee"/></svg><svg class="icon"><use href="#t-field"/></svg><span>TotalCents</span></div></li>
                        <li><div class="node"><svg class="guide"><use href="#g-line"/></svg><svg class="guide"><use href="#g-end"/></svg><svg class="icon"><use href="#t-field"/></svg><span>TotalPrice</span></div></li>
                    </ul>
                </li>
                <li>
                    <div class="node"><svg class="guide"><use href="#g-tee"/></svg><svg class="icon"><use href="#t-group"/></svg><span>Group Name Fields</span></div>
                </li>
                <li>
                    <div class="node"><svg class="guide"><use href="#g-plus"/></svg><svg class="icon" viewBox="0 0 16 16"><text x="1" y="14" class="glyph omega">Ω</text></svg><span>Special Fields</span></div>
                </li>
            </ul>
        </aside>
    </div>

    <footer class="statusbar">
        <span class="ready">Ready</span>
        <span class="coords">7,91 , 0,6 : 1,05 x 0,64</span>
        <span class="pages">Page: 1 of 1</span>
    </footer>
</div>

<svg class="pointer" viewBox="0 0 14 22" aria-hidden="true"><path d="M1 1v17l4-4 3 6.500 2.500-1L8 13.500h5z" fill="#fff" stroke="#333"/></svg>

</body>
</html>
```
FILE: styles.css
```
* {
    box-sizing: border-box;
}
body {
    margin: 0;
    padding: 0 220px 0 203px;
    background-color: #000;
    color: #1a1a1a;
    font-family: "Open Sans", "Noto Sans", sans-serif;
    font-size: 12px;
}
h1, h2, p, ul {
    margin: 0;
    padding: 0;
    font-weight: normal;
}
a {
    color: inherit;
    text-decoration: none;
}
button {
    display: flex;
    align-items: center;
    justify-content: center;
    margin: 0;
    padding: 0;
    border: 1px solid transparent;
    background: none;
    color: #111;
}
select, input {
    font: inherit;
}
.sprite {
    position: absolute;
}
.app {
    display: flex;
    flex-direction: column;
    height: 100vh;
    border-bottom: 1px solid #b4c4cc;
    background-color: #f0f0f0;
}

/* lettering inside the icons */
.glyph {
    font-family: "Liberation Serif", serif;
    font-size: 15px;
    font-weight: bold;
    fill: currentColor;
}
.glyph.large { font-size: 17px; }
.glyph.small { font-size: 11px; }
.glyph.slanted { font-style: italic; }
.glyph.at {
    font-size: 12px;
    font-style: italic;
}
.glyph.omega {
    font-size: 17px;
    fill: #2f55a4;
}
.letter {
    font-family: "Liberation Sans", sans-serif;
    font-size: 9px;
    font-weight: bold;
    fill: currentColor;
}
.sort-a { fill: #2b3f9c; }
.sort-z { fill: #b02a2a; }

/* title bar */
.titlebar {
    display: grid;
    grid-template-columns: 1fr auto 1fr;
    align-items: start;
    height: 24px;
    padding: 0 3px 0 1px;
    border-bottom: 1px solid #dcdde2;
    background-color: #fdfdfd;
}
.titlebar h1 {
    font-size: 15px;
    line-height: 22px;
    color: #333;
}
.logo {
    width: 18px;
    height: 18px;
    margin-top: 2px;
}
.winbuttons {
    display: flex;
    justify-content: flex-end;
}
.winbtn {
    width: 28px;
    height: 19px;
}
.winbtn svg {
    width: 13px;
    height: 13px;
}
.winbtn.close {
    width: 48px;
    background-color: #c75050;
}

/* menu and toolbars */
.dock {
    background: linear-gradient(to right, #eaedfa, #f3f6fc 90%);
    height: 89px;
    padding-left: 3px;
}
.menubar {
    display: flex;
    align-items: center;
    gap: 17px;
    height: 27px;
    color: #222;
}
.grip {
    flex: none;
    width: 7px;
    height: 20px;
    background: radial-gradient(circle, #8b92a8 1px, transparent 2px) 1px 0 / 4px 5px repeat-y;
}
.menubar .grip {
    width: 6px;
    height: 15px;
    margin-right: -7px;
}
.toolrow {
    display: flex;
    gap: 4px;
    height: 30px;
    margin-bottom: 1px;
}
.toolbar {
    display: flex;
    align-items: center;
    height: 30px;
    padding-bottom: 2px;
    border-radius: 4px;
    background: linear-gradient(#fcfcfe, #eceef6 45%, #c6ccde);
}
.standard { width: 593px; }
.format { width: 688px; }
.insert { width: 257px; }
.arrange { width: 430px; }
.report { width: 251px; }
.pager { width: 240px; }
.toolbar button, .paneltools button {
    flex: 0 1 24px;
    min-width: 0;
    height: 24px;
}
.toolbar button.drop {
    flex-basis: 12px;
}
.toolbar svg, .paneltools svg {
    flex: none;
    width: 16px;
    height: 16px;
    overflow: visible;
}
.toolbar .drop svg, .combo svg {
    width: 8px;
    height: 16px;
}
.toolbar button:disabled {
    color: #8a92ab;
}
.toolbar button.on {
    border-color: #3d87ad;
    background-color: #a9d6ec;
}
.sep {
    flex: none;
    width: 5px;
    height: 18px;
    background: linear-gradient(#989fb5, #989fb5) center / 1px 18px no-repeat;
}
.format .sep, .arrange .sep {
    width: 6px;
}
.combo {
    display: grid;
    align-items: center;
    height: 27px;
}
.combo select, .combo svg {
    grid-area: 1 / 1;
}
.combo select {
    appearance: none;
    width: 100%;
    height: 27px;
    padding: 0 0 2px 3px;
    border: 1px solid #9a9a9a;
    border-radius: 0;
    background-color: #f0f0f0;
    color: #7b7b7b;
    opacity: 1;
}
.combo svg {
    justify-self: end;
    margin-right: 5px;
    color: #777;
    pointer-events: none;
}
.combo.zoom {
    width: 105px;
    margin-left: 3px;
}
.zoom select {
    border-color: #fff;
    background: linear-gradient(#e3e6f0, #e3e6f0) right center / 14px 24px no-repeat #fff;
    color: #222;
}
.zoom svg {
    margin-right: 4px;
    color: #000;
}
.font {
    width: 214px;
    margin-right: 1px;
}
.size {
    width: 53px;
}
.pager input {
    width: 106px;
    min-width: 0;
    height: 27px;
    border: 1px solid #9a9a9a;
    background-color: #f0f0f0;
    color: #666;
    text-align: center;
}

/* open documents */
.workspace {
    display: flex;
    flex: 1;
    min-height: 0;
}
.documents {
    display: flex;
    flex: 1;
    flex-direction: column;
    min-width: 0;
    padding-right: 1px;
    background: linear-gradient(#f1f1f1, #fafafa 20px);
}
.tabs {
    display: flex;
    align-items: flex-end;
    height: 21px;
    padding-left: 7px;
}
.tab {
    position: relative;
    display: flex;
    align-items: center;
    gap: 8px;
    width: 143px;
    height: 19px;
    padding-left: 20px;
    white-space: nowrap;
}
.tab.active {
    z-index: 1;
    height: 20px;
    margin: 0 0 -1px -21px;
}
.tabshape {
    position: absolute;
    inset: 0;
    width: 100%;
    height: 100%;
    fill: #fcfcfc;
    stroke: #a0a0a0;
}
.tab a, .tab button {
    position: relative;
}
.tab button {
    z-index: 2;
}
.tab button svg {
    width: 10px;
    height: 10px;
}
.frame {
    display: flex;
    flex: 1;
    min-height: 0;
    padding: 3px;
    border: 1px solid #a8a8a8;
    background-color: #f2f2f2;
}
.viewer {
    display: flex;
    flex: 1;
    border: 1px solid #6e6e6e;
    background-color: #c1c1c1;
}
.canvas {
    display: flex;
    flex: 1;
    padding: 0 106px 0 109px;
    overflow: hidden;
}
.paper {
    flex: 1;
    border-left: 1px solid #000;
    border-right: 3px solid #000;
    background-color: #fff;
}
.scrollbar {
    display: flex;
    flex-direction: column;
    width: 18px;
    border-left: 1px solid #fff;
    background-color: #f0f0f0;
}
.scrollbar button {
    height: 20px;
}
.scrollbar button svg {
    width: 10px;
    height: 10px;
}
.track {
    flex: 1;
    padding: 75px 1px 0 0;
}
.thumb {
    height: 82%;
    background-color: #cdcdcd;
}

/* printed invoice */
.address {
    display: flex;
    flex-direction: column;
    padding: 134px 0 0 167px;
    font-size: 16px;
    font-style: normal;
    line-height: 25px;
}
.city {
    display: grid;
    grid-template-columns: 207px auto;
}
.paper h2 {
    padding: 74px 0 0 81px;
    font-size: 21px;
    line-height: 30px;
}
.date {
    display: grid;
    grid-template-columns: 91px auto;
    padding: 5px 0 0 81px;
    line-height: 20px;
}
.orders {
    width: 433px;
    margin: 16px 0 0 81px;
    border-collapse: collapse;
    table-layout: fixed;
    text-align: right;
}
.orders th, .orders td {
    height: 20px;
    padding: 0;
    font-weight: normal;
    line-height: 20px;
}
.orders th {
    height: 23px;
    vertical-align: top;
    line-height: 22px;
}
.orders th:nth-child(1) { width: 77px; }
.orders th:nth-child(2) { width: 68px; }
.orders th:nth-child(3) { width: 139px; }
.orders tbody tr:nth-child(even) td {
    height: 21px;
}
.orders tfoot td {
    height: 16px;
    font-size: 13px;
    font-weight: bold;
    line-height: 16px;
}
.slip {
    display: grid;
    font-family: "Liberation Mono", "Courier New", monospace;
    font-size: 14px;
    line-height: 20px;
}
.slip.inner {
    grid-template-columns: 122px auto;
    padding: 100px 0 0 210px;
}
.slip.outer {
    grid-template-columns: 87px auto;
    padding: 29px 0 0 28px;
}

/* field explorer */
.explorer {
    width: 400px;
    background-color: #fff;
}
.panelhead {
    display: flex;
    align-items: center;
    gap: 4px;
    height: 26px;
    padding: 0 3px 0 4px;
    background: linear-gradient(to right, #becddc, #d6e3f1);
    color: #111;
}
.panelhead h2 {
    flex: 1;
    font-size: 15px;
}
.panelhead button {
    width: 13px;
    height: 20px;
}
.panelhead svg {
    flex: none;
    width: 10px;
    height: 10px;
}
.paneltools {
    display: flex;
    align-items: center;
    height: 27px;
    padding-left: 4px;
    background-color: #f1f1f1;
}
.paneltools button:disabled {
    color: #b5b5b5;
}
.paneltools .sep {
    height: 14px;
    background: linear-gradient(#c4c4c4, #c4c4c4) center / 1px 14px no-repeat;
}
.tree {
    padding-left: 5px;
}
.tree, .tree ul {
    list-style: none;
}
.tree ul {
    padding-bottom: 1px;
}
.node {
    display: flex;
    align-items: center;
    height: 19px;
}
.guide {
    width: 16px;
    height: 20px;
}
.icon {
    width: 17px;
    height: 17px;
    margin-right: 3px;
    overflow: visible;
}
.node span {
    padding: 0 2px;
    line-height: 18px;
}
.selected span {
    background-color: #f0f0f0;
}

/* status bar */
.statusbar {
    display: flex;
    align-items: center;
    height: 21px;
    padding-top: 2px;
    border-top: 1px solid #d9d9d9;
    line-height: 18px;
}
.ready {
    flex: 1;
    padding-left: 3px;
}
.coords {
    width: 160px;
}
.pages {
    width: 163px;
    padding-left: 3px;
    border-left: 1px solid #d5d5d5;
}

.pointer {
    position: absolute;
    left: 940px;
    top: 390px;
    width: 14px;
    height: 22px;
}
```
